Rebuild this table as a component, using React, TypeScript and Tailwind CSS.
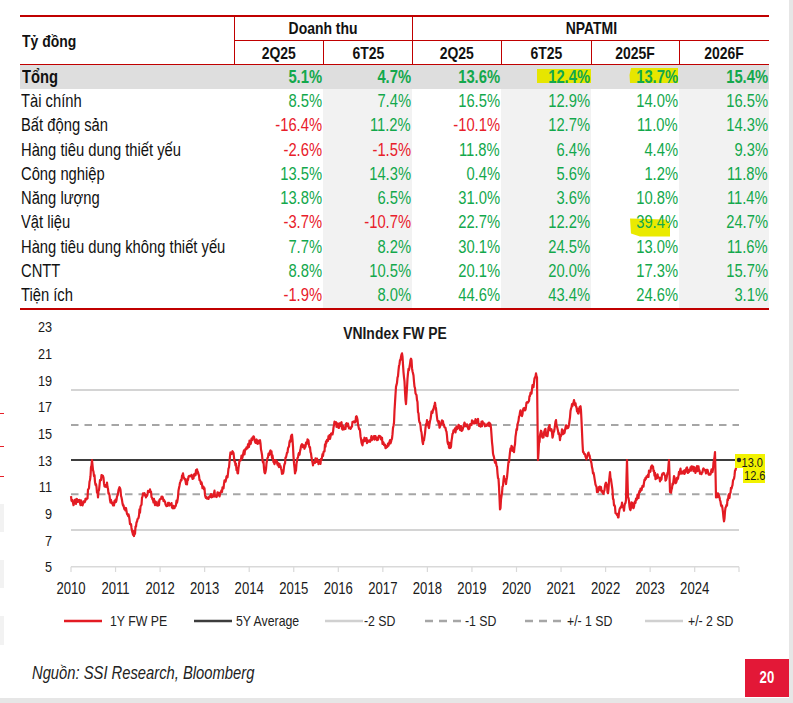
import React from "react";

const rows: string[][] = [
  ["Tài chính", "8.5%", "7.4%", "16.5%", "12.9%", "14.0%", "16.5%"],
  ["Bất động sản", "-16.4%", "11.2%", "-10.1%", "12.7%", "11.0%", "14.3%"],
  ["Hàng tiêu dung thiết yếu", "-2.6%", "-1.5%", "11.8%", "6.4%", "4.4%", "9.3%"],
  ["Công nghiệp", "13.5%", "14.3%", "0.4%", "5.6%", "1.2%", "11.8%"],
  ["Năng lượng", "13.8%", "6.5%", "31.0%", "3.6%", "10.8%", "11.4%"],
  ["Vật liệu", "-3.7%", "-10.7%", "22.7%", "12.2%", "39.4%", "24.7%"],
  ["Hàng tiêu dung không thiết yếu", "7.7%", "8.2%", "30.1%", "24.5%", "13.0%", "11.6%"],
  ["CNTT", "8.8%", "10.5%", "20.1%", "20.0%", "17.3%", "15.7%"],
  ["Tiện ích", "-1.9%", "8.0%", "44.6%", "43.4%", "24.6%", "3.1%"],
];

const pts: number[][] = [
  [71,10.3],[73,9.8],[78,10.0],[82,9.7],[87,10.1],[90,11.5],[92,13.0],[94,11.8],[96,11.2],[98,10.2],[100,11.5],[103,11.8],[105,11.0],[107,11.3],[110,10.0],[113,9.6],[115,9.8],[118,10.5],[120,10.9],[122,10.0],[125,9.4],[128,8.8],[131,8.2],[134,7.3],[136,8.0],[138,8.6],[141,9.6],[143,10.5],[146,10.2],[150,10.8],[153,10.0],[157,9.6],[162,10.1],[166,9.6],[170,9.7],[174,9.4],[177,9.8],[180,11.3],[183,12.0],[186,11.2],[189,11.8],[193,11.6],[197,12.3],[200,11.5],[204,10.8],[207,10.1],[210,10.3],[214,10.5],[218,10.4],[222,10.6],[225,11.5],[228,12.0],[230,13.3],[233,13.6],[235,12.9],[238,12.0],[240,13.0],[243,13.4],[246,13.8],[250,14.3],[253,14.7],[256,14.4],[260,14.5],[262,13.4],[265,12.0],[268,13.2],[271,13.6],[274,12.8],[277,12.9],[280,12.5],[283,12.0],[286,13.2],[289,14.0],[292,14.9],[295,12.0],[298,13.2],[302,14.2],[305,14.0],[308,14.5],[311,13.5],[313,12.6],[316,13.0],[320,12.8],[323,13.3],[326,14.4],[329,14.6],[332,15.0],[335,15.8],[338,15.5],[341,15.7],[344,15.3],[347,15.6],[350,15.4],[354,15.9],[357,16.2],[360,15.2],[362,14.2],[365,14.5],[369,14.4],[373,14.7],[377,14.5],[380,14.8],[383,14.3],[386,13.9],[389,14.2],[392,14.6],[394,15.8],[396,18.5],[398,19.3],[400,20.5],[402,21.0],[404,19.2],[406,17.2],[408,19.5],[410,20.2],[411,20.6],[413,19.5],[415,18.4],[417,17.5],[419,16.0],[421,15.2],[423,14.2],[425,15.0],[427,16.0],[429,15.4],[431,16.3],[433,16.8],[435,17.3],[437,16.2],[440,15.5],[443,15.9],[446,15.2],[448,14.2],[451,14.0],[453,15.0],[456,15.3],[459,15.6],[462,15.2],[465,15.7],[468,15.4],[471,15.7],[474,15.9],[477,16.0],[480,15.6],[483,15.8],[486,15.6],[489,15.8],[491,15.4],[493,13.5],[495,12.8],[497,12.5],[499,11.0],[500,9.3],[502,10.5],[504,11.8],[506,11.2],[508,12.5],[510,13.6],[512,14.0],[514,13.6],[516,15.0],[518,15.8],[520,16.6],[522,16.3],[524,16.8],[526,17.0],[528,17.3],[530,17.8],[532,18.3],[534,18.8],[536,19.5],[537,19.2],[538,13.0],[539,14.3],[541,15.2],[543,14.7],[545,15.3],[547,14.8],[549,15.5],[551,15.2],[553,14.8],[555,15.6],[556,16.0],[558,15.2],[560,14.5],[562,15.3],[564,15.0],[566,15.6],[568,15.4],[570,16.2],[572,17.2],[574,17.5],[576,17.0],[578,16.5],[580,17.0],[581,16.7],[583,13.6],[586,13.2],[589,13.4],[591,12.9],[593,12.0],[595,11.4],[597,10.6],[600,11.0],[603,10.5],[606,11.3],[608,10.5],[610,12.1],[612,11.0],[614,9.6],[616,9.0],[618,8.7],[620,9.4],[622,9.8],[624,9.2],[626,10.0],[627,13.0],[628,10.2],[630,9.3],[632,9.8],[634,9.5],[636,10.1],[638,10.3],[640,10.6],[642,10.9],[644,11.3],[646,11.6],[648,11.9],[650,12.1],[652,12.6],[654,12.2],[656,11.6],[658,11.8],[660,11.4],[662,11.9],[664,12.0],[666,11.5],[668,12.1],[669,13.0],[670,10.6],[672,10.9],[674,11.8],[676,11.3],[678,11.6],[680,12.2],[683,12.0],[686,12.3],[689,12.1],[692,12.5],[695,12.2],[698,12.4],[701,12.0],[704,12.3],[707,12.1],[710,11.9],[713,12.3],[715,13.6],[716,10.2],[718,10.5],[720,10.0],[722,9.6],[724,8.4],[726,9.5],[728,10.0],[730,10.5],[732,11.0],[734,11.6],[736,12.4],[737,13.0],[738,12.6],[739,12.6],
];

const yv = (v: number) => 566.7 - (v - 5) * 13.333;

function buildPath(): string {
  let seed = 987654;
  const rnd = () => {
    seed = (Math.imul(seed, 1664525) + 1013904223) >>> 0;
    return seed / 4294967296;
  };
  const out: string[] = [];
  for (let i = 0; i < pts.length - 1; i++) {
    const [xa, va] = pts[i];
    const [xb, vb] = pts[i + 1];
    const steps = Math.max(1, Math.round((xb - xa) * 2));
    for (let s = 0; s < steps; s++) {
      const t = s / steps;
      const x = xa + (xb - xa) * t;
      let v = va + (vb - va) * t;
      if (s > 0) v += (rnd() - 0.5) * 0.45;
      out.push(`${x.toFixed(2)},${yv(v).toFixed(2)}`);
    }
  }
  const last = pts[pts.length - 1];
  out.push(`${last[0]},${yv(last[1]).toFixed(2)}`);
  return "M" + out.join(" L");
}

const linePath = buildPath();
const years = [2010, 2011, 2012, 2013, 2014, 2015, 2016, 2017, 2018, 2019, 2020, 2021, 2022, 2023, 2024];
const yearX = (i: number) => 71 + i * 44.55;
const yTicks = [23, 21, 19, 17, 15, 13, 11, 9, 7, 5];

const numColor = (s: string) => (s.startsWith("-") ? "text-[#e8202a]" : "text-[#13a84c]");

/* narrow text: Arial metrics squeezed to Arial Narrow width */
function NL({ children, className = "" }: { children: React.ReactNode; className?: string }) {
  return <span className={`inline-block whitespace-nowrap scale-x-[0.82] origin-left ${className}`}>{children}</span>;
}
function NR({ children, className = "" }: { children: React.ReactNode; className?: string }) {
  return <span className={`relative inline-block whitespace-nowrap scale-x-[0.82] origin-right ${className}`}>{children}</span>;
}
function NC({ children, className = "" }: { children: React.ReactNode; className?: string }) {
  return <span className={`inline-block whitespace-nowrap scale-x-[0.82] origin-center ${className}`}>{children}</span>;
}

function ST({
  x,
  y,
  size,
  anchor = "start",
  weight = 400,
  children,
}: {
  x: number;
  y: number;
  size: number;
  anchor?: "start" | "middle" | "end";
  weight?: number;
  children: React.ReactNode;
}) {
  return (
    <text
      transform={`translate(${x},${y}) scale(0.82,1)`}
      textAnchor={anchor}
      fontSize={size}
      fontWeight={weight}
      fill="#1a1a1a"
    >
      {children}
    </text>
  );
}

function Chart() {
  return (
    <svg width={789} height={300} className="block" fontFamily="'Liberation Sans', Arial, sans-serif">
      <g transform="translate(0,-310)">
        <ST x={395} y={339} size={17} anchor="middle" weight={700}>
          VNIndex FW PE
        </ST>
        {yTicks.map((t) => (
          <ST key={t} x={52} y={yv(t) + 5.6} size={15.5} anchor="end">
            {t}
          </ST>
        ))}
        <line x1={71} x2={739} y1={566.7} y2={566.7} stroke="#d9d9d9" strokeWidth={1.5} />
        {years.map((y, i) => (
          <g key={y}>
            <line x1={yearX(i)} x2={yearX(i)} y1={566.7} y2={572} stroke="#d9d9d9" strokeWidth={1.2} />
            <ST x={yearX(i)} y={593.5} size={16} anchor="middle">
              {y}
            </ST>
          </g>
        ))}
        <line x1={739} x2={739} y1={566.7} y2={572} stroke="#d9d9d9" strokeWidth={1.2} />
        <line x1={71} x2={739} y1={390} y2={390} stroke="#d4d4d4" strokeWidth={2} />
        <line x1={71} x2={739} y1={530} y2={530} stroke="#d4d4d4" strokeWidth={2} />
        <line x1={71} x2={739} y1={425} y2={425} stroke="#a6a6a6" strokeWidth={2} strokeDasharray="7.5 6" />
        <line x1={71} x2={739} y1={494.3} y2={494.3} stroke="#a6a6a6" strokeWidth={2} strokeDasharray="7.5 6" />
        <line x1={71} x2={739} y1={460} y2={460} stroke="#3d3d3d" strokeWidth={2} />
        <path d={linePath} fill="none" stroke="#e31b23" strokeWidth={2.2} strokeLinejoin="round" />
        <rect x={735} y={454} width={30} height={14} fill="#f2f200" />
        <rect x={743} y={467} width={22} height={16} fill="#f2f200" />
        <circle cx={739} cy={460} r={2.2} fill="#222" />
        <ST x={741.5} y={467} size={13.5}>13.0</ST>
        <ST x={744} y={479.5} size={13.5}>12.6</ST>
      </g>
    </svg>
  );
}

function LegendLine({ kind }: { kind: "red" | "dark" | "light" | "dash" }) {
  const stroke = kind === "red" ? "#e31b23" : kind === "dark" ? "#3d3d3d" : kind === "light" ? "#d0d0d0" : "#a6a6a6";
  return (
    <svg width={38} height={4} className="block shrink-0">
      <line
        x1={0}
        x2={38}
        y1={2}
        y2={2}
        stroke={stroke}
        strokeWidth={2.5}
        strokeDasharray={kind === "dash" ? "8 6" : undefined}
      />
    </svg>
  );
}

export default function App() {
  const cols = "grid grid-cols-[214px_89px_89px_89px_90px_88px_90px]";
  return (
    <div className="relative w-[793px] h-[703px] bg-[#e6e6e6] font-['Liberation_Sans',Arial,sans-serif] text-[#111]">
      <div className="w-[789px] h-[698px] bg-white flex flex-col">
        {/* Table */}
        <div className="ml-[20px] w-[749px] mt-[15px]">
          <div className={`${cols} grid-rows-[24px_23px] border-t-2 border-b border-[#c00000] font-bold text-[17px]`}>
            <div className="row-span-2 flex items-center pl-[2px] pt-[2px]">
              <NL>Tỷ đồng</NL>
            </div>
            <div className="col-span-2 border-l border-b border-[#c00000] flex items-center justify-center">
              <NC>Doanh thu</NC>
            </div>
            <div className="col-span-4 border-l border-b border-[#c00000] flex items-center justify-center">
              <NC>NPATMI</NC>
            </div>
            {["2Q25", "6T25", "2Q25", "6T25", "2025F", "2026F"].map((h, i) => (
              <div key={i} className="border-l border-[#c00000] flex items-center justify-center pt-[2px]">
                <NC>{h}</NC>
              </div>
            ))}
          </div>
          <div className="border-b-2 border-[#c00000]">
            <div className={`${cols} h-[24px] bg-[#dedede] font-bold text-[18px] leading-[24px]`}>
              <div className="pl-[2px]">
                <NL>Tổng</NL>
              </div>
              <div className="text-right pr-[1px] text-[#13a84c]"><NR>5.1%</NR></div>
              <div className="text-right pr-[1px] text-[#13a84c]"><NR>4.7%</NR></div>
              <div className="text-right pr-[1px] text-[#13a84c]"><NR>13.6%</NR></div>
              <div className="relative text-right pr-[1px] text-[#13a84c]">
                <span className="absolute left-[36px] top-[4px] w-[54px] h-[14px] bg-[#e6e600]" />
                <NR>12.4%</NR>
              </div>
              <div className="relative text-right pr-[1px] text-[#13a84c]">
                <svg className="absolute left-0 top-0" width={88} height={24}>
                  <polygon points="40,3 87,3 87,18 39,18 38.5,10" fill="#e6e600" />
                </svg>
                <NR>13.7%</NR>
              </div>
              <div className="text-right pr-[1px] text-[#13a84c]"><NR>15.4%</NR></div>
            </div>
            {rows.map((r, ri) => (
              <div key={ri} className={`${cols} h-[24.3px] text-[18px] leading-[24.3px]`}>
                <div className="pl-[1px]">
                  <NL>{r[0]}</NL>
                </div>
                {r.slice(1).map((c, ci) => {
                  const gray = ci === 1 || ci === 3 || ci === 5;
                  const hl = ri === 5 && ci === 4;
                  return (
                    <div
                      key={ci}
                      className={`relative text-right pr-[1px] ${numColor(c)} ${gray ? "bg-[#f2f2f2]" : ""}`}
                    >
                      {hl && (
                        <svg className="absolute left-0 top-0 overflow-visible" width={88} height={24}>
                          <polygon points="39,8.5 75,9.5 79,13.5 79,26.5 49,26.5 40,23.5" fill="#eaea00" />
                        </svg>
                      )}
                      <NR>{c}</NR>
                    </div>
                  );
                })}
              </div>
            ))}
          </div>
        </div>

        {/* Chart */}
        <Chart />

        {/* Legend */}
        <div className="grid grid-cols-[130px_131px_100px_100px_120px_auto] ml-[64px] h-[20px] items-center text-[15px] text-[#222]">
          <div className="flex items-center"><LegendLine kind="red" /><NL className="ml-[8px]">1Y FW PE</NL></div>
          <div className="flex items-center"><LegendLine kind="dark" /><NL className="ml-[4px]">5Y Average</NL></div>
          <div className="flex items-center"><LegendLine kind="light" /><NL className="ml-[1px]">-2 SD</NL></div>
          <div className="flex items-center"><LegendLine kind="dash" /><NL className="ml-[2px]">-1 SD</NL></div>
          <div className="flex items-center"><LegendLine kind="dash" /><NL className="ml-[4px]">+/- 1 SD</NL></div>
          <div className="flex items-center"><LegendLine kind="light" /><NL className="ml-[5px]">+/- 2 SD</NL></div>
        </div>

        {/* Footer */}
        <div className="mt-auto flex justify-between items-start">
          <div className="ml-[32px] mt-[3px] italic text-[18px] leading-[22px] text-[#222]">
            <NL>Nguồn: SSI Research, Bloomberg</NL>
          </div>
          <div className="w-[44px] h-[38px] bg-[#e31837] text-white font-bold text-[16px] flex items-center justify-center mb-[1px]">
            <NC>20</NC>
          </div>
        </div>
      </div>

      {/* left-edge slice artefacts */}
      <div className="absolute left-0 top-[413px] w-[4px] h-[1px] bg-[#e8202a]" />
      <div className="absolute left-0 top-[446px] w-[4px] h-[1px] bg-[#e8202a]" />
      <div className="absolute left-0 top-[476px] w-[4px] h-[1px] bg-[#e8202a]" />
      <div className="absolute left-0 top-[504px] w-[4px] h-[28px] bg-[#f2f2f2]" />
      <div className="absolute left-0 top-[560px] w-[4px] h-[28px] bg-[#f2f2f2]" />
      <div className="absolute left-0 top-[616px] w-[4px] h-[29px] bg-[#f2f2f2]" />
    </div>
  );
}
